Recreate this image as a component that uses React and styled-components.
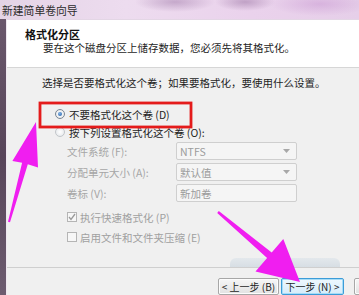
import React from "react";
import styled, { createGlobalStyle } from "styled-components";

const GlobalStyle = createGlobalStyle`
  html, body {
    margin: 0;
    padding: 0;
    background: #f0f0f0;
  }
`;

const Page = styled.div`
  position: relative;
  width: 359px;
  height: 295px;
  overflow: hidden;
  display: flex;
  flex-direction: column;
  font-family: "Noto Sans CJK SC", "Noto Sans", sans-serif;
  font-size: 10.5px;
  color: #1e1e1e;
`;

const TitleBar = styled.div`
  height: 19px;
  flex: none;
  display: flex;
  align-items: center;
  padding-left: 2px;
  font-size: 10.8px;
  color: #2b2b2b;
  background:
    radial-gradient(ellipse 40px 10px at 175px 2px, rgba(150, 110, 160, 0.45), transparent),
    radial-gradient(ellipse 30px 9px at 245px 2px, rgba(140, 100, 150, 0.45), transparent),
    radial-gradient(ellipse 50px 12px at 320px 4px, rgba(200, 150, 210, 0.5), transparent),
    linear-gradient(90deg, #e4d4e6 0%, #eddcef 35%, #ead2ec 70%, #e6cfe9 100%);
`;

const Frame = styled.div`
  flex: 1;
  display: flex;
  min-height: 0;
`;

const FrameEdge = styled.div`
  width: 6px;
  flex: none;
  background: linear-gradient(180deg, #6a586c 0%, #574559 50%, #6d5c70 100%);
`;

const Client = styled.div`
  flex: 1;
  display: flex;
  flex-direction: column;
  border-left: 1px solid #efe7f0;
  border-top: 1px solid #e3d6e5;
  min-width: 0;
`;

const Header = styled.div`
  height: 48px;
  flex: none;
  box-sizing: border-box;
  background: #ffffff;
  border-bottom: 1px solid #d6d6d6;
  padding: 7px 0 0 18px;
`;

const HeaderTitle = styled.div`
  font-weight: 700;
  font-size: 11px;
  line-height: 14px;
  color: #111;
`;

const HeaderText = styled.div`
  line-height: 13px;
  margin-left: 18px;
`;

const Body = styled.div`
  flex: 1;
  display: flex;
  flex-direction: column;
  background: #f0f0f0;
  padding: 8px 0 0 35px;
`;

const Prompt = styled.div`
  line-height: 14px;
`;

const Options = styled.div`
  margin: 15px 0 0 13px;
`;

const RadioRow = styled.div`
  height: 18px;
  display: flex;
  align-items: center;
  gap: 4px;
`;

const Radio = styled.span`
  width: 10px;
  height: 10px;
  border-radius: 50%;
  box-sizing: border-box;
  border: 1px solid ${(p) => (p.checked ? "#7a8591" : "#c2c6ca")};
  background: radial-gradient(circle at 50% 50%, #ffffff, #e2e5e8);
  display: flex;
  align-items: center;
  justify-content: center;

  &::after {
    content: "";
    width: 4px;
    height: 4px;
    border-radius: 50%;
    background: radial-gradient(circle at 40% 35%, #7fb2e8, #1f5aa0);
    display: ${(p) => (p.checked ? "block" : "none")};
  }
`;

const Fields = styled.div`
  margin: 1px 0 0 25px;
  display: grid;
  grid-template-columns: 109px 121px;
  grid-auto-rows: 18px;
  row-gap: 3px;
  color: #a6a6a6;
`;

const FieldLabel = styled.div`
  display: flex;
  align-items: center;
`;

const FieldBox = styled.div`
  box-sizing: border-box;
  border: 1px solid #cfcfcf;
  border-radius: 2px;
  background: #f5f5f5;
  display: flex;
  align-items: center;
  justify-content: space-between;
  padding: 0 6px 0 3px;
  color: #9c9c9c;
`;

const Caret = styled.svg`
  width: 7px;
  height: 4px;
`;

const Checks = styled.div`
  margin: 5px 0 0 25px;
  color: #a0a0a0;
`;

const CheckRow = styled.div`
  height: 20px;
  display: flex;
  align-items: center;
  gap: 3px;
`;

const Box = styled.span`
  width: 10px;
  height: 10px;
  box-sizing: border-box;
  border: 1px solid #b5b5b5;
  background: #f7f7f7;
  display: flex;
  align-items: center;
  justify-content: center;
`;

const GlowRow = styled.div`
  margin-top: auto;
  padding-left: 188px;
`;

const Glow = styled.div`
  width: 110px;
  height: 9px;
  border-radius: 6px 6px 0 0;
  background: linear-gradient(180deg, #e3e8ec, #d7dee4);
`;

const Footer = styled.div`
  height: 28px;
  flex: none;
  box-sizing: border-box;
  border-top: 1px solid #cfcfcf;
  background: #f0f0f0;
  display: flex;
  padding: 10px 0 0 211px;
  gap: 2px;
  overflow: hidden;
`;

const Button = styled.div`
  width: ${(p) => p.w}px;
  height: 17px;
  flex: none;
  box-sizing: border-box;
  border: 1px solid ${(p) => (p.focus ? "#3c9cd8" : "#a7a7a7")};
  border-radius: 2px;
  background: ${(p) =>
    p.focus
      ? "linear-gradient(180deg, #eef8fe, #d6ecfa)"
      : "linear-gradient(180deg, #f6f6f6, #e2e2e2)"};
  box-shadow: ${(p) => (p.focus ? "inset 0 0 0 1px #a6dcf7" : "inset 0 0 0 1px #fcfcfc")};
  display: flex;
  align-items: center;
  justify-content: center;
  margin-left: ${(p) => p.ml || 0}px;
  font-size: 10px;
  color: #1e1e1e;
  white-space: nowrap;
`;

const Overlay = styled.svg`
  position: absolute;
  left: 0;
  top: 0;
  width: 359px;
  height: 295px;
  pointer-events: none;
`;

const App = () => {
  const fields = [
    { label: "文件系统 (F):", value: "NTFS", drop: true },
    { label: "分配单元大小 (A):", value: "默认值", drop: true },
    { label: "卷标 (V):", value: "新加卷", drop: false },
  ];

  return (
    <Page>
      <GlobalStyle />
      <TitleBar>新建简单卷向导</TitleBar>
      <Frame>
        <FrameEdge />
        <Client>
          <Header>
            <HeaderTitle>格式化分区</HeaderTitle>
            <HeaderText>要在这个磁盘分区上储存数据，您必须先将其格式化。</HeaderText>
          </Header>
          <Body>
            <Prompt>选择是否要格式化这个卷；如果要格式化，要使用什么设置。</Prompt>
            <Options>
              <RadioRow>
                <Radio checked />
                不要格式化这个卷 (D)
              </RadioRow>
              <RadioRow>
                <Radio />
                按下列设置格式化这个卷 (O):
              </RadioRow>
            </Options>
            <Fields>
              {fields.map((f) => (
                <React.Fragment key={f.label}>
                  <FieldLabel>{f.label}</FieldLabel>
                  <FieldBox>
                    {f.value}
                    {f.drop && (
                      <Caret viewBox="0 0 7 4">
                        <path d="M0 0 L7 0 L3.5 4 Z" fill="#a8a8a8" />
                      </Caret>
                    )}
                  </FieldBox>
                </React.Fragment>
              ))}
            </Fields>
            <Checks>
              <CheckRow>
                <Box>
                  <svg width="8" height="8" viewBox="0 0 8 8">
                    <path d="M1 4 L3 6.5 L7 1" fill="none" stroke="#9a9a9a" strokeWidth="1.3" />
                  </svg>
                </Box>
                执行快速格式化 (P)
              </CheckRow>
              <CheckRow>
                <Box />
                启用文件和文件夹压缩 (E)
              </CheckRow>
            </Checks>
            <GlowRow>
              <Glow />
            </GlowRow>
          </Body>
          <Footer>
            <Button w={61}>&lt; 上一步 (B)</Button>
            <Button w={63} focus>
              下一步 (N) &gt;
            </Button>
            <Button w={70} ml={8} />
          </Footer>
        </Client>
      </Frame>
      <Overlay viewBox="0 0 359 295">
        <rect x="40" y="103" width="151" height="24" fill="none" stroke="#e41b1b" strokeWidth="2.8" />
        <polygon
          points="8,221.7 22.1,162.7 12.4,161 36,122 38,167.5 27.8,164.3 10,222.3"
          fill="#f01ef0"
        />
        <polygon
          points="217.2,212.9 267.1,257.9 255.5,271.5 300,282 283.3,238.9 271.7,252.5 218.8,211.1"
          fill="#f01ef0"
        />
      </Overlay>
    </Page>
  );
};

export default App;
